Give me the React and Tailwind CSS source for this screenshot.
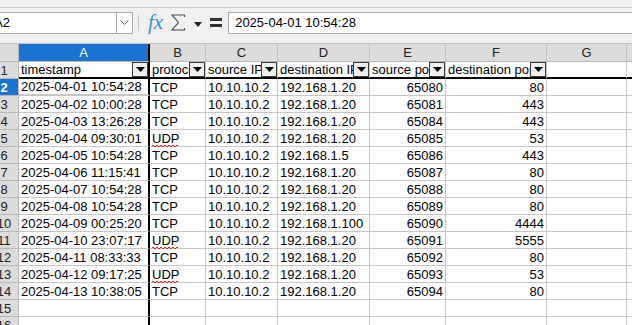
const headers = ['timestamp', 'protocol', 'source IP', 'destination IP', 'source port', 'destination port'];

const rows = [
  ['2025-04-01 10:54:28', 'TCP', '10.10.10.2', '192.168.1.20', '65080', '80'],
  ['2025-04-02 10:00:28', 'TCP', '10.10.10.2', '192.168.1.20', '65081', '443'],
  ['2025-04-03 13:26:28', 'TCP', '10.10.10.2', '192.168.1.20', '65084', '443'],
  ['2025-04-04 09:30:01', 'UDP', '10.10.10.2', '192.168.1.20', '65085', '53'],
  ['2025-04-05 10:54:28', 'TCP', '10.10.10.2', '192.168.1.5', '65086', '443'],
  ['2025-04-06 11:15:41', 'TCP', '10.10.10.2', '192.168.1.20', '65087', '80'],
  ['2025-04-07 10:54:28', 'TCP', '10.10.10.2', '192.168.1.20', '65088', '80'],
  ['2025-04-08 10:54:28', 'TCP', '10.10.10.2', '192.168.1.20', '65089', '80'],
  ['2025-04-09 00:25:20', 'TCP', '10.10.10.2', '192.168.1.100', '65090', '4444'],
  ['2025-04-10 23:07:17', 'UDP', '10.10.10.2', '192.168.1.20', '65091', '5555'],
  ['2025-04-11 08:33:33', 'TCP', '10.10.10.2', '192.168.1.20', '65092', '80'],
  ['2025-04-12 09:17:25', 'UDP', '10.10.10.2', '192.168.1.20', '65093', '53'],
  ['2025-04-13 10:38:05', 'TCP', '10.10.10.2', '192.168.1.20', '65094', '80'],
];

// column widths, A carries the freeze line on its right
const colW = [
  'w-[131px] shrink-0 border-r-2 border-r-black',
  'w-[56px] shrink-0 border-r border-r-[#c6c6c6]',
  'w-[72px] shrink-0 border-r border-r-[#c6c6c6]',
  'w-[92px] shrink-0 border-r border-r-[#c6c6c6]',
  'w-[76px] shrink-0 border-r border-r-[#c6c6c6]',
  'w-[101px] shrink-0 border-r border-r-[#c6c6c6]',
  'w-[80px] shrink-0 border-r border-r-[#c6c6c6]',
  'flex-1',
];

// spell-check squiggle under UDP
let wave = 'M0,2';
for (let x = 2; x <= 26; x += 2) wave += ` Q${x - 1},${x % 4 === 2 ? 0 : 4} ${x},2`;

function RowHead({ n, active, h = 'h-[17px]' }) {
  return (
    <div
      className={`w-[19px] shrink-0 overflow-hidden border-r border-b border-[#b8b8b8] flex items-center ${h} ${
        active ? 'bg-[#1b73cf] text-white font-bold' : 'bg-[#dcdcdc] text-[#222]'
      }`}
    >
      <span className="w-[30px] -ml-[11px] shrink-0 text-center leading-[15px]">{n}</span>
    </div>
  );
}

function FilterBtn() {
  return (
    <div className="w-[16px] h-[15px] shrink-0 border border-[#3a3a3a] bg-[#efefef] flex items-center justify-center">
      <svg width="9" height="5" viewBox="0 0 9 5">
        <polygon points="0,0 9,0 4.5,5" fill="#000" />
      </svg>
    </div>
  );
}

export default function App() {
  return (
    <div className="w-[632px] h-[325px] overflow-hidden bg-white text-[13px] text-black font-['Liberation_Sans',Arial,sans-serif]">
      {/* toolbar edge */}
      <div className="h-[8px] bg-[#f0f0f0] border-b border-[#c8c8c8]" />

      {/* formula bar */}
      <div className="h-[35px] bg-[#f0f0f0] flex items-start pt-[4px]">
        <div className="w-[126px] h-[22px] -ml-[9px] bg-white border border-[#ababab] flex items-center pl-[2px] overflow-hidden">
          <span className="leading-[16px]">A2</span>
        </div>
        <div className="w-[17px] h-[22px] -ml-px bg-white border border-[#ababab] flex items-center justify-center">
          <svg width="9" height="6" viewBox="0 0 9 6">
            <polyline points="0.5,0.5 4.5,4.5 8.5,0.5" fill="none" stroke="#666" strokeWidth="1" />
          </svg>
        </div>
        <div className="w-px h-[16px] mt-[3px] ml-[5px] bg-[#c4c4c4]" />
        <span className="ml-[9px] -mt-[2px] text-[21px] leading-[24px] italic text-[#3d8fd6] font-['Liberation_Serif',serif]">
          fx
        </span>
        <svg className="ml-[8px] mt-[2px]" width="15" height="17" viewBox="0 0 15 17">
          <polyline points="13.5,3 13.5,1 1,1 7.5,8.5 1,16 13.5,16 13.5,14" fill="none" stroke="#4a4a4a" strokeWidth="1.1" />
        </svg>
        <svg className="ml-[8px] mt-[10px]" width="8" height="5" viewBox="0 0 8 5">
          <polygon points="0,0 8,0 4,5" fill="#222" />
        </svg>
        <svg className="ml-[8px] mt-[6px]" width="12" height="10" viewBox="0 0 12 10">
          <rect x="0" y="0" width="12" height="3" fill="#333" />
          <rect x="0" y="6" width="12" height="3" fill="#333" />
        </svg>
        <div className="ml-[6px] flex-1 h-[22px] -mr-[4px] bg-white border border-[#ababab] flex items-center pl-[6px]">
          <span className="leading-[16px]">2025-04-01 10:54:28</span>
        </div>
      </div>

      {/* column headers */}
      <div className="flex h-[19px] border-t border-[#c4c4c4]">
        <div className="w-[19px] shrink-0 bg-[#dcdcdc] border-r border-b border-[#b8b8b8]" />
        {['A', 'B', 'C', 'D', 'E', 'F', 'G', ''].map((c, i) => (
          <div
            key={i}
            className={`${colW[i]} border-b border-b-[#b8b8b8] flex items-center justify-center ${
              i === 0 ? 'bg-[#1b73cf] text-white' : 'bg-[#dcdcdc] text-[#222]'
            } ${i > 0 && i < 7 ? 'border-r-[#b8b8b8]' : ''}`}
          >
            {c}
          </div>
        ))}
      </div>

      {/* header row 1 */}
      <div className="flex">
        <RowHead n={1} />
        {headers.map((h, i) => (
          <div key={i} className={`${colW[i]} h-[17px] border-b-2 border-b-black flex items-start`}>
            <span className="flex-1 overflow-hidden whitespace-nowrap pl-[2px] leading-[15px]">{h}</span>
            <FilterBtn />
          </div>
        ))}
        <div className={`${colW[6]} h-[17px] border-b-2 border-b-black`} />
        <div className={`${colW[7]} h-[17px] border-b-2 border-b-black`} />
      </div>

      {/* data rows */}
      {rows.map((r, ri) => (
        <div key={ri} className="flex">
          <RowHead n={ri + 2} active={ri === 0} />
          {r.map((v, i) => (
            <div
              key={i}
              className={`${colW[i]} h-[17px] border-b border-b-[#c6c6c6] flex items-center whitespace-nowrap ${
                i >= 4 ? 'justify-end pr-[2px]' : 'pl-[2px]'
              } ${ri === 0 && i === 0 ? 'border-b-2 border-b-[#1b73cf]' : ''}`}
            >
              {v === 'UDP' ? (
                <span className="relative leading-[15px]">
                  {v}
                  <svg className="absolute left-0 top-[13px]" width="26" height="4" viewBox="0 0 26 4">
                    <path d={wave} fill="none" stroke="#e0281e" strokeWidth="1" />
                  </svg>
                </span>
              ) : (
                <span className="leading-[15px]">{v}</span>
              )}
            </div>
          ))}
          <div className={`${colW[6]} h-[17px] border-b border-b-[#c6c6c6]`} />
          <div className={`${colW[7]} h-[17px] border-b border-b-[#c6c6c6]`} />
        </div>
      ))}

      {/* empty rows */}
      {[15, 16].map((n) => (
        <div key={n} className="flex">
          <RowHead n={n} />
          {colW.map((w, i) => (
            <div key={i} className={`${w} h-[17px] border-b border-b-[#c6c6c6]`} />
          ))}
        </div>
      ))}
    </div>
  );
}
